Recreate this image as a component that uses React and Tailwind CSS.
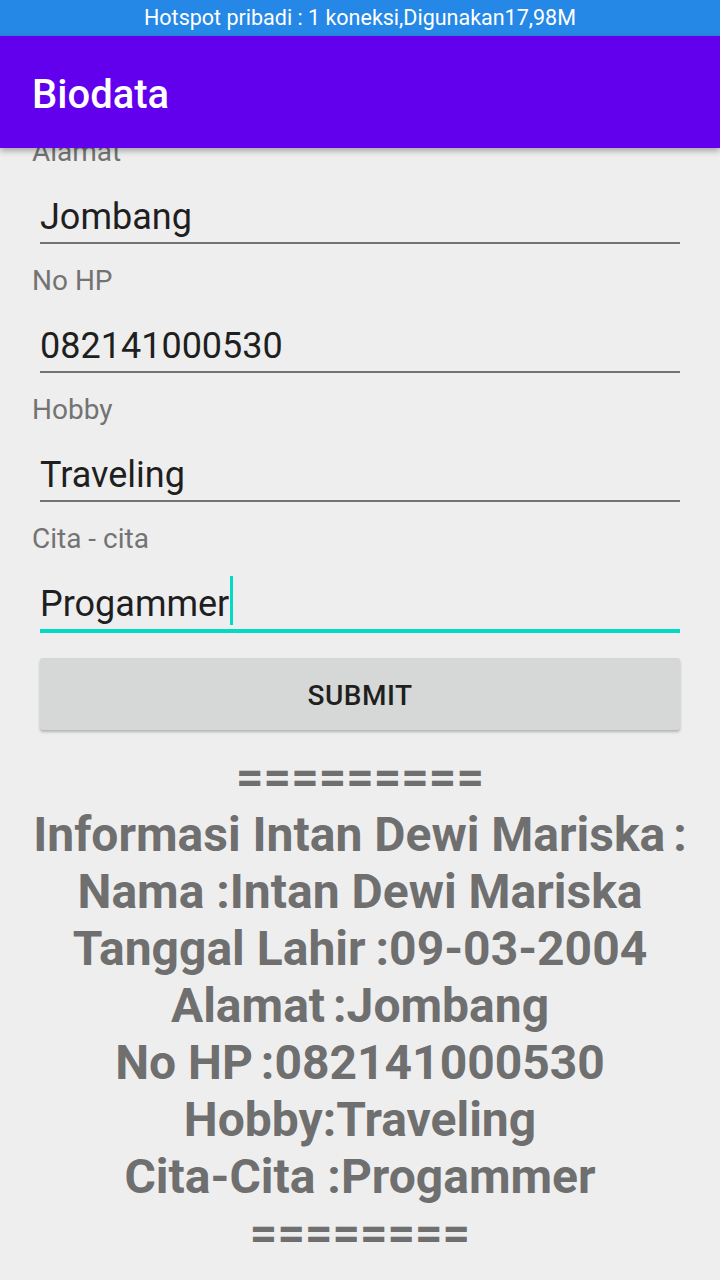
import React from 'react';

const fields = [
  { label: 'Alamat', value: 'Jombang' },
  { label: 'No HP', value: '082141000530' },
  { label: 'Hobby', value: 'Traveling' },
  { label: 'Cita - cita', value: 'Progammer', focused: true },
];

// [before colon, after colon, extra gap before colon]
const info = [
  ['=========', null, 0],
  ['Informasi Intan Dewi Mariska', '', 8],
  ['Nama ', 'Intan Dewi Mariska', 0],
  ['Tanggal Lahir', '09-03-2004', 10],
  ['Alamat', 'Jombang', 8],
  ['No HP', '082141000530', 8],
  ['Hobby', 'Traveling', 0],
  ['Cita-Cita ', 'Progammer', 0],
  ['========', null, 0],
];

const gapClass = { 0: '', 8: 'ml-[8px]', 10: 'ml-[10px]' };

function Field({ label, value, focused }) {
  return (
    <div className="flex flex-col">
      <div className="h-[33px] pt-[1px] pl-[32px] text-[28px] leading-[33px] text-[#737373]">{label}</div>
      <div className="mx-[40px] mt-[29px] flex h-[42px] items-end">
        <span className="text-[36px] leading-[42px] text-[#1f1f1f]">{value}</span>
        {focused && <span className="ml-[1px] h-[49px] w-[3px] bg-[#03dac5]" />}
      </div>
      {focused ? (
        <div className="mx-[40px] mt-[4px] mb-[17px] h-[4px] bg-[#03dac5]" />
      ) : (
        <div className="mx-[40px] mt-[4px] mb-[19px] h-[2px] bg-[#737373]" />
      )}
    </div>
  );
}

function App() {
  return (
    <div className="flex h-[1280px] w-[720px] flex-col overflow-hidden bg-[#eeeeee] font-['Roboto',sans-serif]">
      <div className="flex h-[36px] items-center justify-center bg-[#2688e6] text-[21.5px] text-white">
        Hotspot pribadi : 1 koneksi,Digunakan17,98M
      </div>
      <div className="relative z-10 flex h-[112px] items-center bg-[#6200ee] pt-[6px] pl-[32px] shadow-[0_3px_6px_rgba(0,0,0,0.3)]">
        <h1 className="text-[40px] font-medium text-white">Biodata</h1>
      </div>
      <div className="flex-1 overflow-hidden">
        <div className="mt-[-14px] flex flex-col">
          {fields.map((f) => (
            <Field key={f.label} {...f} />
          ))}
          <button className="mx-[40px] mt-[8px] h-[72px] rounded-[3px] bg-[#d6d7d7] pt-[4px] text-[28px] font-medium tracking-[0.5px] text-[#1f1f1f] shadow-[0_2px_3px_rgba(0,0,0,0.25)]">
            SUBMIT
          </button>
          <div className="mt-[19px] flex flex-col items-center text-center text-[48px] font-bold leading-[57px] text-[#6f6f6f]">
            {info.map(([head, tail, gap], i) => (
              <div key={i} className="whitespace-nowrap">
                {head}
                {tail !== null && <span className={gapClass[gap]}>:</span>}
                {tail}
              </div>
            ))}
          </div>
        </div>
      </div>
    </div>
  );
}

export default App;
